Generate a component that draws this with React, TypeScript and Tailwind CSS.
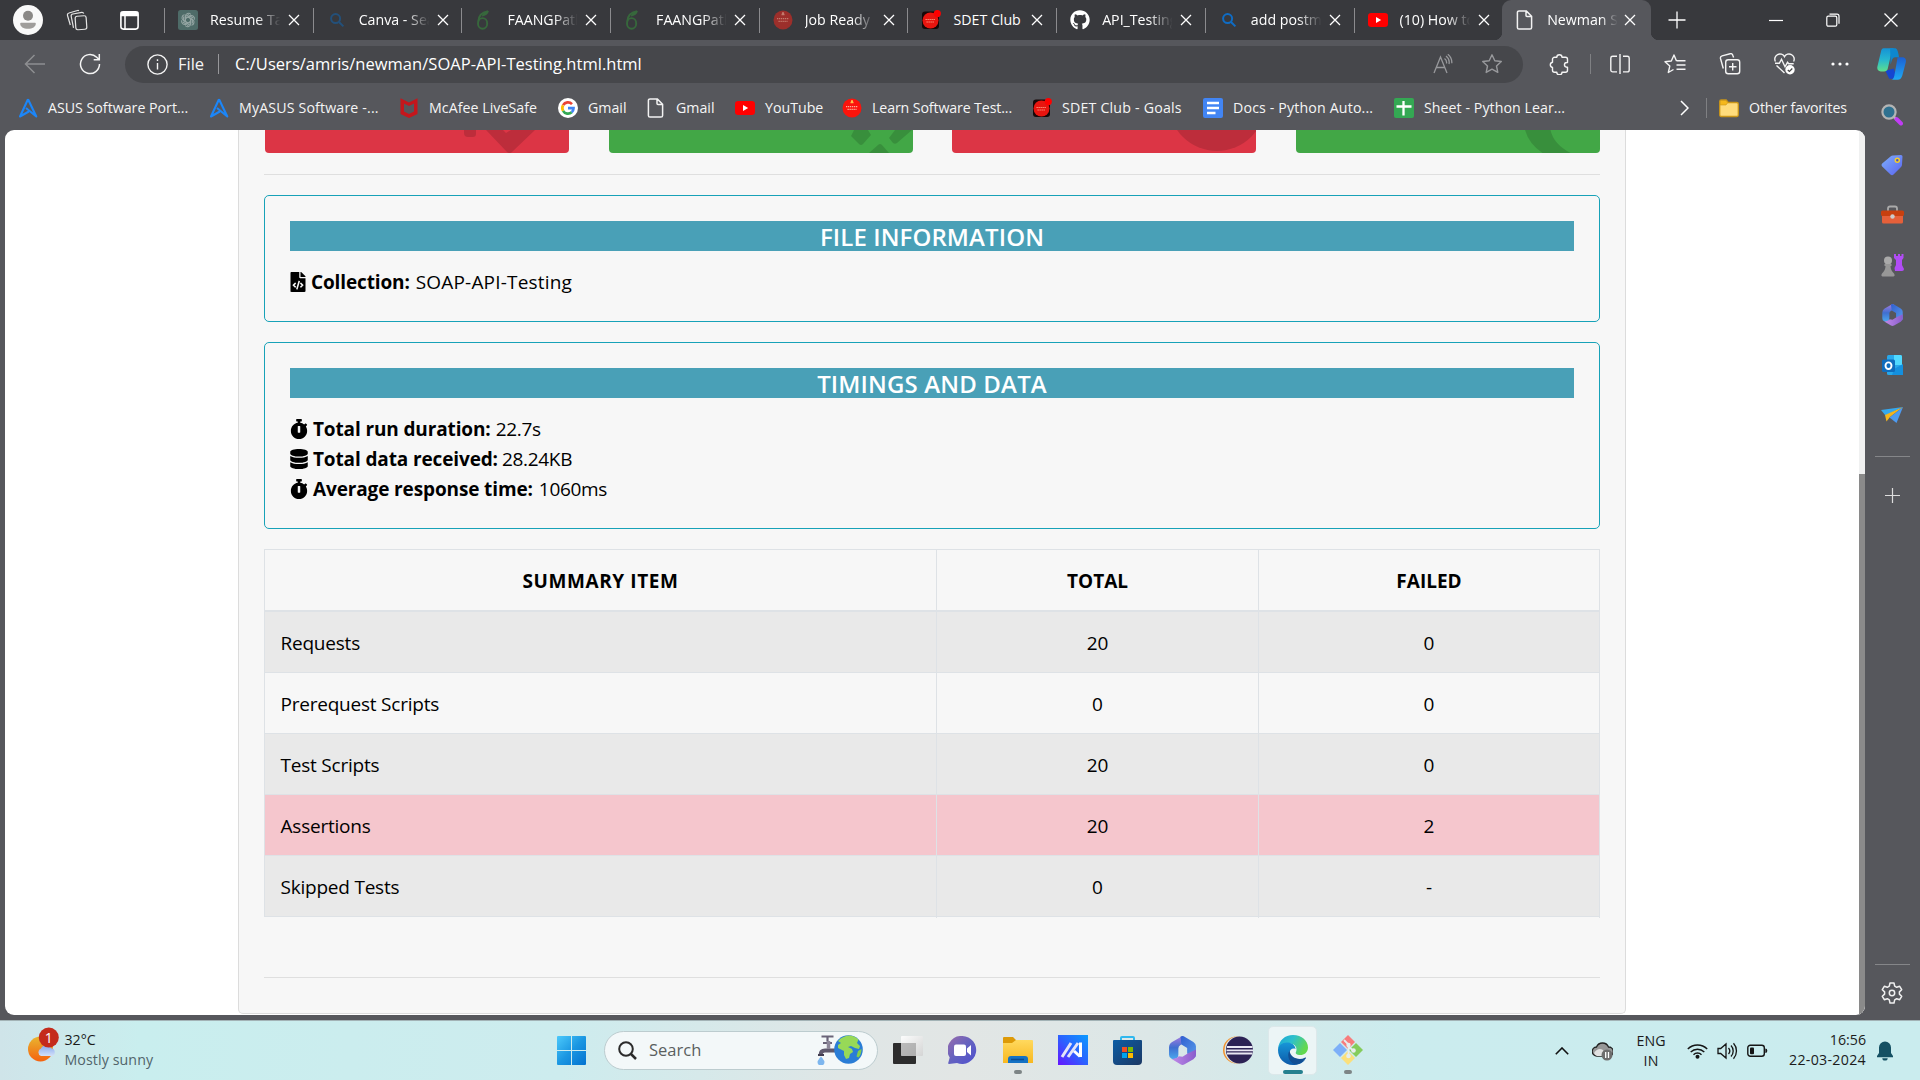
import React from "react";
import { FaDatabase, FaFileCode, FaGithub, FaStopwatch } from "react-icons/fa";

type P = { className?: string };

const Close = () => (
  <svg className="h-3 w-3 shrink-0" viewBox="0 0 12 12" fill="none" stroke="#fff" strokeWidth="1.3">
    <path d="M1 1l10 10M11 1L1 11" />
  </svg>
);

const Doc = () => (
  <svg className="h-5 w-5" viewBox="0 0 20 20" fill="none" stroke="#f2f2f2" strokeWidth="1.5" strokeLinejoin="round">
    <path d="M4 .9h7.2L16.6 6.3v11.2a1.6 1.6 0 0 1-1.6 1.6H4a1.6 1.6 0 0 1-1.6-1.6v-15A1.6 1.6 0 0 1 4 .9zM11 1v4.6a1 1 0 0 0 1 1h4.6" />
  </svg>
);

const YouTube = () => (
  <svg className="h-5 w-5" viewBox="0 0 20 20">
    <rect x="0" y="3" width="20" height="14" rx="3.2" fill="#f00" />
    <path d="M8 7l5.2 3L8 13z" fill="#fff" />
  </svg>
);

const Ai = () => (
  <svg className="h-5 w-5" viewBox="0 0 20 20">
    <rect width="20" height="20" rx="2.5" fill="#4e6b68" />
    <g fill="none" stroke="#94a5a3" strokeWidth="1.1">
      {[0, 60, 120, 180, 240, 300].map((a) => (
        <path key={a} transform={`rotate(${a} 10 10)`} d="M7.4 11.3V6.2a3 3 0 0 1 5.4-1.7M7.4 8.4l4.3-2.5 3.6 2.1" />
      ))}
    </g>
  </svg>
);

const Lens = ({ dim }: { dim?: boolean }) => (
  <svg className="h-5 w-5" viewBox="0 0 20 20" fill="none" stroke={dim ? "#23507a" : "#0f6cc4"} strokeWidth="2">
    <circle cx="8.6" cy="8.6" r="4.5" />
    <path d="M12 12l4.4 4.4" />
  </svg>
);

const Leaf = () => (
  <svg className="h-5 w-5" viewBox="0 0 20 20" fill="none" stroke="#37683c" strokeWidth="1.9">
    <ellipse cx="7.6" cy="13.4" rx="4.6" ry="5.3" />
    <path d="M3.3 11.5C3.4 6.300 6.800 2.300 13 1.200" />
    <path d="M6.500 6.500C8 2.600 10.500 1 14 1c-1 3-3 5-7.500 5.500z" fill="#37683c" stroke="none" />
  </svg>
);

const Academy = ({ dim }: { dim?: boolean }) => (
  <svg className="h-5 w-5" viewBox="0 0 20 20">
    <circle cx="10" cy="10" r="9.500" fill={dim ? "#9c2f2b" : "#fb140c"} />
    <path d="M8.500 4.500h3M9 3h2" stroke={dim ? "#c37a6d" : "#ffc04a"} strokeWidth="1.300" />
    <path d="M4 8.600h12M5.500 11.400h9" stroke={dim ? "#c37a6d" : "#ffb09a"} strokeWidth="1.300" strokeDasharray="1.300 .7" />
  </svg>
);

const Sdet = () => (
  <svg className="h-5 w-5" viewBox="0 0 20 20">
    <rect x="1" y="1.500" width="17" height="17.500" rx="3" fill="#170808" />
    <circle cx="9.500" cy="10.500" r="8" fill="#e8150f" />
    <path d="M4.500 9.500h10M5.500 12h8" stroke="#ff9a80" strokeWidth="1.100" strokeDasharray="1.300 .7" />
    <circle cx="16.300" cy="3.600" r="3.600" fill="#f00" />
  </svg>
);

const Asus = () => (
  <svg className="h-5 w-5" viewBox="0 0 20 20" fill="none" stroke="#1c86f8" strokeWidth="2.100" strokeLinejoin="round">
    <path d="M10 1.200L2 18.500 10.800 13.500M10 1.200L18.300 18.500 8 10" />
  </svg>
);

const McAfee = () => (
  <svg className="h-5 w-5" viewBox="0 0 20 20">
    <path d="M1.500 .3L10 4.500 18.500 .3v15.600L10 19.900l-8.500-4zM5 5.600v8l5 2.400 5-2.400v-8l-5 2.500z" fill="#c4161c" fillRule="evenodd" />
  </svg>
);

const Google = () => (
  <svg className="h-5 w-5" viewBox="0 0 20 20">
    <circle cx="10" cy="10" r="10" fill="#fff" />
    <g fill="none" strokeWidth="2.700">
      <path d="M14 6.100A5.600 5.600 0 0 0 5.100 7.200" stroke="#ea4335" />
      <path d="M5.100 7.200a5.600 5.600 0 0 0 0 5.600" stroke="#fbbc05" />
      <path d="M5.100 12.800a5.600 5.600 0 0 0 8.600 1.400" stroke="#34a853" />
      <path d="M13.700 14.200A5.400 5.400 0 0 0 15.500 10.200H10" stroke="#4285f4" />
    </g>
  </svg>
);

const Docs = () => (
  <svg className="h-5 w-5" viewBox="0 0 20 20">
    <rect width="20" height="20" rx="2" fill="#4285f4" />
    <path d="M4 5h12M4 10h12M4 15h8.500" stroke="#fff" strokeWidth="2.300" />
  </svg>
);

const Sheet = () => (
  <svg className="h-5 w-5" viewBox="0 0 20 20">
    <rect width="20" height="20" rx="2" fill="#34a853" />
    <path d="M2.500 8.500h15M9.500 3v14.500" stroke="#fff" strokeWidth="2.300" />
  </svg>
);

const Folder = () => (
  <svg className="h-5 w-5" viewBox="0 0 20 20">
    <path d="M.7 17V3.500A1.500 1.500 0 0 1 2.200 2h5l2 2.500h8.600a1.500 1.500 0 0 1 1.500 1.500v11a1.500 1.500 0 0 1-1.500 1.500H2.200A1.500 1.500 0 0 1 .7 17z" fill="#ffdc7c" stroke="#c99518" strokeWidth="1.300" />
    <path d="M1.300 7V3.500a1 1 0 0 1 1-1h4.500l2 2.200L7 7z" fill="#f5b81c" stroke="#c99518" strokeWidth=".6" />
  </svg>
);

const tabs: { icon: React.ReactNode; label: string }[] = [
  { icon: <Ai />, label: "Resume Tai" },
  { icon: <Lens dim />, label: "Canva - Sea" },
  { icon: <Leaf />, label: "FAANGPath" },
  { icon: <Leaf />, label: "FAANGPath" },
  { icon: <Academy dim />, label: "Job Ready" },
  { icon: <Sdet />, label: "SDET Club" },
  { icon: <FaGithub className="h-5 w-5 text-white" />, label: "API_Testing" },
  { icon: <Lens />, label: "add postma" },
  { icon: <YouTube />, label: "(10) How to" },
];

const Fade = ({ children, className = "" }: { children: React.ReactNode; className?: string }) => (
  <span className={`w-[72px] shrink-0 overflow-hidden whitespace-nowrap ${className}`}>{children}</span>
);

function TabStrip() {
  return (
    <div className="flex h-10 shrink-0 items-center bg-[#38393d] text-[14.2px] text-white">
      <div className="flex w-[164px] shrink-0 items-center pl-[13px]">
        <svg className="h-[30px] w-[30px]" viewBox="0 0 30 30">
          <circle cx="15" cy="15" r="15" fill="#f9f9f9" />
          <circle cx="15" cy="10.800" r="5" fill="#8a8886" />
          <path d="M8 17.700h14a.8.8 0 0 1 .8.800c0 3.300-3.300 5.300-7.800 5.300s-7.800-2-7.800-5.300a.8.8 0 0 1 .8-.8z" fill="#9f9d9b" />
        </svg>
        <svg className="ml-[23px] h-[22px] w-[22px]" viewBox="0 0 22 22" fill="none" stroke="#e4e4e4" strokeWidth="1.200">
          <rect x="9.500" y="7" width="11" height="13.500" rx="2" transform="rotate(-4 15 14)" />
          <path d="M7.500 18.800L5.200 7.300a2 2 0 0 1 1.600-2.300l9-1.700a2 2 0 0 1 2 1.200M4.300 16L1.500 6.500A2 2 0 0 1 3 4L11.500 1.500a2 2 0 0 1 1.500.2" />
        </svg>
        <svg className="ml-8 h-[19px] w-[19px]" viewBox="0 0 19 19" fill="none" stroke="#fff" strokeWidth="1.600">
          <rect x=".9" y=".9" width="17.200" height="17.200" rx="2.500" />
          <path d="M1 3.500h17M5 3v15" strokeWidth="1.500" />
          <path d="M1.500 1.500h16v3h-16z" fill="#fff" />
        </svg>
      </div>
      {tabs.map((t, i) => (
        <div key={i} className="flex w-[148.7px] shrink-0 items-center">
          <div className="h-[25px] w-px bg-[#8b8b8e]" />
          <span className="ml-[13px] w-5 shrink-0">{t.icon}</span>
          <Fade
            className={
              t.label === "SDET Club"
                ? "ml-[12px]"
                : "ml-[12px] [mask-image:linear-gradient(to_right,black_65%,transparent_98%)]"
            }
          >
            {t.label}
          </Fade>
          <span className="ml-[6px]"><Close /></span>
        </div>
      ))}
      <div className="relative flex h-10 w-[148.500px] shrink-0 items-center rounded-t-[9px] bg-[#56575c]">
        <i className="absolute bottom-0 -left-2 h-2 w-2 bg-[radial-gradient(circle_at_0_0,transparent_8px,#56575c_8.5px)]" />
        <i className="absolute -right-2 bottom-0 h-2 w-2 bg-[radial-gradient(circle_at_100%_0,transparent_8px,#56575c_8.5px)]" />
        <span className="ml-[13px] w-5"><Doc /></span>
        <Fade className="ml-[12px] [mask-image:linear-gradient(to_right,black_75%,transparent_98%)]">Newman Su</Fade>
        <span className="ml-[5px]"><Close /></span>
      </div>
      <svg className="ml-[17px] h-[18px] w-[18px] shrink-0" viewBox="0 0 18 18" stroke="#fff" strokeWidth="1.300">
        <path d="M9 .5v17M.5 9h17" />
      </svg>
      <div className="flex grow items-center justify-end pr-[22px]">
        <svg className="h-[14px] w-[14px]" viewBox="0 0 14 14" stroke="#fff" strokeWidth="1.200"><path d="M0 7.500h14" /></svg>
        <svg className="ml-[43px] h-[14px] w-[14px]" viewBox="0 0 14 14" fill="none" stroke="#fff" strokeWidth="1.200">
          <rect x=".8" y="3.200" width="10" height="10" rx="1.500" />
          <path d="M3.500 1.200h7.500a2 2 0 0 1 2 2v7.500" />
        </svg>
        <svg className="ml-[44px] h-[14px] w-[14px]" viewBox="0 0 14 14" stroke="#fff" strokeWidth="1.300"><path d="M.5.5l13 13M13.500.5l-13 13" /></svg>
      </div>
    </div>
  );
}

const starPath = "M11 1.800l2.800 5.900 6.500.8-4.800 4.500 1.300 6.400-5.800-3.200-5.800 3.200 1.300-6.400L1.700 8.500l6.500-.8z";

function Toolbar() {
  return (
    <div className="flex h-[50px] shrink-0 items-center bg-[#56575c] pt-[3px] pb-[5px] text-[#f4f4f4]">
      <svg className="ml-6 h-[22px] w-[22px]" viewBox="0 0 22 22" fill="none" stroke="#8d8e91" strokeWidth="1.500">
        <path d="M21 11H2M10.500 2L1.500 11l9 9" />
      </svg>
      <svg className="ml-[33px] h-[22px] w-[22px]" viewBox="0 0 22 22" fill="none" stroke="currentColor" strokeWidth="1.500">
        <path d="M20.500 11a9.500 9.500 0 1 1-2.800-6.700L20 6.500M20.300 1v5.700h-5.600" />
      </svg>
      <div className="ml-[24px] flex h-[37px] w-[1398px] items-center rounded-full bg-[#46474b]">
        <svg className="ml-[22px] h-[21px] w-[21px]" viewBox="0 0 21 21" fill="none" stroke="currentColor" strokeWidth="1.400">
          <circle cx="10.500" cy="10.500" r="9.600" />
          <path d="M10.500 9v6.500M10.500 5.300v1.800" />
        </svg>
        <span className="ml-[10px] w-[40px] text-[16.500px]">File</span>
        <div className="h-5 w-px bg-[#98989b]" />
        <span className="ml-[16px] grow text-[16.500px] tracking-[0.03px] text-white">C:/Users/amris/newman/SOAP-API-Testing.html.html</span>
        <svg className="h-[20px] w-[20px]" viewBox="0 0 20 20" fill="none" stroke="#98999c" strokeWidth="1.300">
          <path d="M1 19L7.500 3 14 19M3.300 13.500h8.400M11.500 4.500a5 5 0 0 1 2 5M13 2a8 8 0 0 1 3 8M14.800.3a10.500 10.500 0 0 1 4 9" />
        </svg>
        <svg className="mr-[20px] ml-[28px] h-[22px] w-[22px]" viewBox="0 0 22 22" fill="none" stroke="#98999c" strokeWidth="1.400" strokeLinejoin="round">
          <path d={starPath} />
        </svg>
      </div>
      <div className="flex items-center">
        <svg className="ml-[26px] h-[21px] w-[21px]" viewBox="0 0 21 21" fill="none" stroke="currentColor" strokeWidth="1.400" strokeLinejoin="round">
          <path d="M7.800 3.300a2.600 2.600 0 0 1 5.200 0h3.500a2 2 0 0 1 2 2v3.200h-.7a2.300 2.300 0 0 0 0 4.700h.7v3a2 2 0 0 1-2 2H13a2.600 2.600 0 0 1-5.200 0H5.500a2 2 0 0 1-2-2v-2.700a2.700 2.700 0 0 1 0-5.300V5.300a2 2 0 0 1 2-2z" />
        </svg>
        <div className="ml-[20px] h-5 w-px bg-[#7f8083]" />
        <svg className="ml-[19px] h-[20px] w-[20px]" viewBox="0 0 20 20" fill="none" stroke="currentColor" strokeWidth="1.400">
          <path d="M10 0v20M7 2.200H2.700A1.900 1.900 0 0 0 .8 4v12a1.900 1.900 0 0 0 1.900 1.900H7M13 2.200h4.300A1.900 1.900 0 0 1 19.200 4v12a1.900 1.900 0 0 1-1.900 1.900H13" />
        </svg>
        <svg className="ml-[34px] h-[22px] w-[22px]" viewBox="0 0 22 22" fill="none" stroke="currentColor" strokeWidth="1.400" strokeLinejoin="round">
          <path d="M12.500 8L10 2 7.300 8 1 8.700l4.800 4.400L4.300 19.500 9.500 16.500M12.500 7.800h9M12.500 12h9M12.500 16.200h9" />
        </svg>
        <svg className="ml-[33px] h-[22px] w-[22px]" viewBox="0 0 22 22" fill="none" stroke="currentColor" strokeWidth="1.400">
          <rect x="6.700" y="6.700" width="14" height="14" rx="2.500" />
          <path d="M13.700 10v7.500M10 13.700h7.500M4.300 15.500L1.500 5.500a2.300 2.300 0 0 1 1.600-2.700l8-2.100a2.300 2.300 0 0 1 2.700 1.600l.8 2.200" />
        </svg>
        <svg className="ml-[33px] h-[22px] w-[22px]" viewBox="0 0 22 22" fill="none" stroke="currentColor" strokeWidth="1.400">
          <path d="M10.500 20L2.500 12.500M1.400 8.500a5 5 0 0 1 9.100-4.800 5 5 0 0 1 9.100 4.800M1 10.300h4.300l2.200-4 3.500 7.500 2.500-4.500 1.200 1.500h5" />
          <circle cx="16" cy="16.800" r="4.700" fill="#fff" stroke="none" />
          <path d="M13.800 17l1.600 1.500 2.900-3" stroke="#444" strokeWidth="1.200" />
        </svg>
        <svg className="ml-[35px] h-[4px] w-[18px]" viewBox="0 0 18 4" fill="#fff">
          <circle cx="2" cy="2" r="1.600" /><circle cx="9" cy="2" r="1.600" /><circle cx="16" cy="2" r="1.600" />
        </svg>
        <svg className="ml-[28px] h-[32px] w-[30px]" viewBox="0 0 32 28" preserveAspectRatio="none">
          <defs>
            <linearGradient id="cpA" x1="0" y1="0" x2="0" y2="1"><stop offset="0" stopColor="#1593d6" /><stop offset=".5" stopColor="#27b7cf" /><stop offset="1" stopColor="#5fe08b" /></linearGradient>
            <linearGradient id="cpB" x1="0" y1="0" x2="0" y2="1"><stop offset="0" stopColor="#1c5fd3" /><stop offset="1" stopColor="#1fa9f3" /></linearGradient>
          </defs>
          <path d="M9 20l4 7h8l-3-9z" fill="#1546d0" />
          <path d="M22 8h5c3 0 4.500 2 3.700 4.500L27 24c-.8 2.500-2.500 3.700-5 3.700h-7c2 0 3-1.500 3.500-3.500z" fill="url(#cpB)" />
          <path d="M7 .3h12c-2 0-3 1.500-3.500 3.500L11.500 18c-.6 2-1.800 2.500-4 2.500H4c-3 0-4.300-2-3.500-4.500L4 4C4.600 1.500 5.500.3 7 .3z" fill="url(#cpA)" />
          <path d="M14 .3h5c2.300 0 3.500 2 4.500 7.700h-3.800c-2.500 0-3.700 1.500-4.200 3.500l-1 3z" fill="#0d87cf" />
        </svg>
      </div>
    </div>
  );
}

const favs: { icon: React.ReactNode; label: string; w: string }[] = [
  { icon: <Asus />, label: "ASUS Software Port...", w: "w-[191px]" },
  { icon: <Asus />, label: "MyASUS Software -...", w: "w-[190px] tracking-[0.15px]" },
  { icon: <McAfee />, label: "McAfee LiveSafe", w: "w-[159px] tracking-[0.05px]" },
  { icon: <Google />, label: "Gmail", w: "w-[88px]" },
  { icon: <Doc />, label: "Gmail", w: "w-[89px]" },
  { icon: <YouTube />, label: "YouTube", w: "w-[107px]" },
  { icon: <Academy />, label: "Learn Software Test...", w: "w-[190px] tracking-[-0.12px]" },
  { icon: <Sdet />, label: "SDET Club - Goals", w: "w-[171px] tracking-[0.2px]" },
  { icon: <Docs />, label: "Docs - Python Auto...", w: "w-[191px] tracking-[0.15px]" },
  { icon: <Sheet />, label: "Sheet - Python Lear...", w: "w-[283px] tracking-[0.05px]" },
];

function Favorites() {
  return (
    <div className="flex h-10 shrink-0 items-center bg-[#56575c] pb-1 pl-[18px] text-[14.200px] text-[#f5f5f5]">
      {favs.map((f, i) => (
        <div key={i} className={`flex shrink-0 items-center gap-[10px] whitespace-nowrap ${f.w}`}>
          {f.icon}
          <span>{f.label}</span>
        </div>
      ))}
      <svg className="ml-[3px] h-4 w-[9px]" viewBox="0 0 9 16" fill="none" stroke="#fff" strokeWidth="1.500"><path d="M1 1l7 7-7 7" /></svg>
      <div className="ml-[17px] h-5 w-px bg-[#7f8083]" />
      <div className="ml-[12px] flex items-center gap-[10px]">
        <Folder />
        <span className="tracking-[-0.12px]">Other favorites</span>
      </div>
    </div>
  );
}

function Cards() {
  return (
    <div className="flex h-[23px] gap-[39.600px] pl-px">
      <div className="h-[23px] w-[304px] rounded-b bg-[#dc3545]">
        <svg className="h-[23px] w-[304px]" viewBox="0 0 304 23" fill="#000" fillOpacity=".14">
          <path d="M199 0h12v4a3 3 0 0 1-3 3h-5a4 4 0 0 1-4-4zM221 0h17l3 3 5-3h24L247.500 21.500q-3 3-6 0z" />
        </svg>
      </div>
      <div className="h-[23px] w-[304px] rounded-b bg-[#42a746]">
        <svg className="h-[23px] w-[304px]" viewBox="0 0 304 23" fill="#000" fillOpacity=".14">
          <path d="M245 0h14l3 5-8 9q-2 2-4 0l-8-8zM286 0h17L288 13q-2 1.500-4 0l-4-5zM260 23l9-8q2-2 4 0l7 8z" />
        </svg>
      </div>
      <div className="h-[23px] w-[304px] rounded-b bg-[#dc3545]">
        <svg className="h-[23px] w-[304px]" viewBox="0 0 304 23" fill="#000" fillOpacity=".14"><circle cx="265" cy="-27.500" r="48.500" /></svg>
      </div>
      <div className="h-[23px] w-[304px] rounded-b bg-[#42a746]">
        <svg className="h-[23px] w-[304px]" viewBox="0 0 304 23" fill="#000" fillOpacity=".14"><path d="M229 0h25.500q3 14 20 23h-28Q233 14 229 0z" /></svg>
      </div>
    </div>
  );
}

const rows = [
  ["Requests", "20", "0", "bg-[#e9e9e9]"],
  ["Prerequest Scripts", "0", "0", "bg-[#f7f7f7]"],
  ["Test Scripts", "20", "0", "bg-[#e9e9e9]"],
  ["Assertions", "20", "2", "bg-[#f5c6cd]"],
  ["Skipped Tests", "0", "-", "bg-[#e9e9e9]"],
];

const Line = ({ icon, label, value, fit }: { icon: React.ReactNode; label: string; value: string; fit: string }) => (
  <div className="flex h-[30px] items-center">
    {icon}
    <b className="tracking-[-0.13px]">{label}</b>
    <span className={fit}>{value}</span>
  </div>
);

function Report() {
  return (
    <div className="flex w-[1388px] shrink-0 flex-col rounded-b-[5px] border-x border-b border-[#dcdcdc] bg-[#f7f7f7] px-[25px] text-[19px] text-black">
      <Cards />
      <div className="mt-[21px] h-px bg-[#dfdfdf]" />
      <div className="mt-[20px] h-[127px] w-[1336px] rounded-[5px] border border-[#17a2b8] px-[25px] pt-[25px]">
        <h2 className="h-[30px] bg-[#49a0b7] text-center text-[24px] leading-[31px] font-semibold tracking-[0.1px] text-white">FILE INFORMATION</h2>
        <div className="mt-4">
          <Line icon={<FaFileCode className="mr-[5px] h-5 w-4" />} label="Collection:" value="SOAP-API-Testing" fit="ml-[6px] tracking-[0.18px]" />
        </div>
      </div>
      <div className="mt-[20px] h-[187px] w-[1336px] rounded-[5px] border border-[#17a2b8] px-[25px] pt-[25px]">
        <h2 className="h-[30px] bg-[#49a0b7] text-center text-[24px] leading-[31px] font-semibold tracking-[0.15px] text-white">TIMINGS AND DATA</h2>
        <div className="mt-4">
          <Line icon={<FaStopwatch className="mr-[5px] h-5 w-[18px]" />} label="Total run duration:" value="22.7s" fit="ml-[5px] tracking-[-0.3px]" />
          <Line icon={<FaDatabase className="mr-[5px] h-5 w-[18px]" />} label="Total data received:" value="28.24KB" fit="ml-[4px] tracking-[-0.3px]" />
          <Line icon={<FaStopwatch className="mr-[5px] h-5 w-[18px]" />} label="Average response time:" value="1060ms" fit="ml-[6px] tracking-[-0.3px]" />
        </div>
      </div>
      <div className="mt-[20px] w-[1336px] border-t border-l border-[#dee2e6]">
        <div className="grid h-[62px] grid-cols-[672px_322px_341px] border-b-2 border-[#dee2e6] text-center leading-[62px] font-bold">
          <div className="h-[60px] border-r border-[#dee2e6] tracking-[0.6px]">SUMMARY ITEM</div>
          <div className="h-[60px] border-r border-[#dee2e6]">TOTAL</div>
          <div className="h-[60px] border-r border-[#dee2e6]">FAILED</div>
        </div>
        {rows.map(([name, total, failed, bg]) => (
          <div key={name} className={`grid h-[61px] grid-cols-[672px_322px_341px] border-b border-[#dee2e6] text-center leading-[62px] ${bg}`}>
            <div className="border-r border-[#dee2e6] pl-[15.500px] text-left tracking-[-0.22px]">{name}</div>
            <div className="border-r border-[#dee2e6]">{total}</div>
            <div className="border-r border-[#dee2e6]">{failed}</div>
          </div>
        ))}
      </div>
      <div className="mt-[60px] h-px bg-[#dfdfdf]" />
    </div>
  );
}

const Cell = ({ children }: { children: React.ReactNode }) => <div className="flex h-[50px] w-[46px] items-center justify-center">{children}</div>;

const Hex = ({ className }: P) => (
  <svg className={className} viewBox="0 0 26 28">
    <defs>
      <linearGradient id="hxA" x1="0" y1="0" x2="0" y2="1"><stop offset="0" stopColor="#a77be0" /><stop offset=".5" stopColor="#3f6fd0" /><stop offset="1" stopColor="#4ba8ee" /></linearGradient>
      <linearGradient id="hxB" x1="0" y1="0" x2="1" y2="1"><stop offset="0" stopColor="#2f5fd0" /><stop offset="1" stopColor="#5a9bea" /></linearGradient>
      <linearGradient id="hxC" x1="0" y1="0" x2="1" y2="0"><stop offset="0" stopColor="#c08be8" /><stop offset="1" stopColor="#8a5ccc" /></linearGradient>
    </defs>
    <path d="M13 0L3 5.800Q0 7.500 0 11v7q0 3 2.500 4l2 .5Q9 21.500 9 18v-6q0-2 2-3.200l4-2.300V1z" fill="url(#hxA)" />
    <path d="M11 .7Q13-.5 15 .7l8.500 5Q26 7.300 26 10v9q-.5 2-3 1.500L17.500 17v-5.500L12 8.200z" fill="url(#hxB)" />
    <path d="M26 13v5q0 3-2.500 4.500L15 27.300q-2 1.200-4 0L2.500 22.200Q7 22.500 9.500 19.500l3.500.5L18 17z" fill="url(#hxC)" />
  </svg>
);

function Sidebar() {
  return (
    <div className="flex w-[54px] shrink-0 flex-col items-center">
      <div className="-mt-[40px] flex flex-col items-center">
        <Cell>
          <svg className="h-[22px] w-[22px]" viewBox="0 0 22 22" fill="none">
            <path d="M13 13l3 3" stroke="#bbb" strokeWidth="2.500" />
            <circle cx="8" cy="8" r="6.600" fill="#2f7190" stroke="#b4b4b4" strokeWidth="2.200" />
            <path d="M15.500 15l4.500 4.500" stroke="#c03cf5" strokeWidth="4" strokeLinecap="round" />
          </svg>
        </Cell>
        <Cell>
          <svg className="h-[22px] w-[22px]" viewBox="0 0 22 22">
            <defs><linearGradient id="tagG" x1="0" y1="0" x2="1" y2="1"><stop offset="0" stopColor="#7eb0fb" /><stop offset="1" stopColor="#5a63f0" /></linearGradient></defs>
            <path d="M12 1.500L20 1q1.500 0 1.500 1.500l-.5 8q0 1.500-1 2.500l-7.500 7.500q-1.500 1.300-3 0L1.200 12.500q-1.300-1.500 0-3L9.500 2.500Q10.500 1.600 12 1.500z" fill="url(#tagG)" />
            <circle cx="16.300" cy="6.300" r="2" fill="#4b55c0" stroke="#f5cd2a" strokeWidth="1.500" />
          </svg>
        </Cell>
        <Cell>
          <svg className="h-[20px] w-[23px]" viewBox="0 0 23 20">
            <path d="M7 6V3.500Q7 1.500 9 1.500h5q2 0 2 2V6" fill="none" stroke="#aaa" strokeWidth="1.800" />
            <rect x="1" y="9" width="21" height="9.500" rx="1.500" fill="#e5603a" />
            <rect x="0" y="5.500" width="23" height="5.500" rx="1.500" fill="#c8400f" />
            <circle cx="11.500" cy="11.500" r="2.200" fill="#ccc" />
          </svg>
        </Cell>
        <Cell>
          <svg className="h-[23px] w-[23px]" viewBox="0 0 23 23">
            <path d="M13 0h2v2h2V0h2v2h1.500V0h2v4L21 6v5l2 4q0 2-2 2h-7l-.500-3 1.500-3V6l-2-2z" fill="#b14cf5" />
            <circle cx="7" cy="6.500" r="4" fill="#aaa" />
            <path d="M3.500 10h7v2H9.500q0 4 3.500 7.500 1.500 2.500-.5 3h-11q-2-.5-.5-3Q4.500 16 4.500 12h-1z" fill="#979797" />
          </svg>
        </Cell>
        <Cell><Hex className="h-[22px] w-[21px]" /></Cell>
        <Cell>
          <svg className="mt-px h-[21px] w-[21px]" viewBox="0 0 21 21">
            <rect x="5" y="0" width="15" height="20" rx="1.500" fill="#28a8ea" />
            <path d="M12 0h6.500Q20 0 20 1.500V10h-8z" fill="#50d9ff" />
            <path d="M12 14l9-5v11H10z" fill="#1490df" />
            <rect x="0" y="4.500" width="13" height="12.500" rx="1.500" fill="#0f6cbd" />
            <ellipse cx="6.500" cy="10.700" rx="3" ry="3.300" fill="none" stroke="#fff" strokeWidth="1.900" />
          </svg>
        </Cell>
        <Cell>
          <svg className="h-[17px] w-[22px]" viewBox="0 0 22 17">
            <path d="M22 0L0 3l4.500 5.500z" fill="#35a8ee" />
            <path d="M22 0L4 8l1.500 6.500L9 10z" fill="#f5b51c" />
            <path d="M22 0L8.500 10.500 15.500 16z" fill="#4d9bf2" />
          </svg>
        </Cell>
      </div>
      <div className="mt-[16px] h-px w-[35px] bg-[#858689]" />
      <svg className="mt-[31px] h-[15px] w-[15px]" viewBox="0 0 15 15" stroke="#ddd" strokeWidth="1.200"><path d="M7.500 0v15M0 7.500h15" /></svg>
      <div className="mt-auto h-px w-[35px] bg-[#858689]" />
      <svg className="mt-[17px] mb-[16px] h-[22px] w-[22px]" viewBox="0 0 22 22" fill="none" stroke="#f0f0f0" strokeWidth="1.500" strokeLinejoin="round">
        <path d="M9 1h4l.7 3.100 2 1.200 3-1L20.700 7.700l-2.300 2.200v2.200l2.300 2.200-2 3.400-3-1-2 1.200L13 21H9l-.7-3.100-2-1.200-3 1-2-3.400 2.300-2.200V9.900L1.300 7.700l2-3.400 3 1 2-1.200z" />
        <circle cx="11" cy="11" r="2.700" />
      </svg>
    </div>
  );
}

const Slot = ({ children }: { children: React.ReactNode }) => (
  <div className="flex h-full w-[55px] shrink-0 flex-col items-center pt-[15px]">{children}</div>
);

function Taskbar() {
  return (
    <div className="flex h-[60px] shrink-0 border-t border-[#a3b3b6] bg-[linear-gradient(90deg,#cfe4e9_0,#c9eeee_140px,#cdecee_560px,#dfe6e6_840px,#e2e6e5_960px,#dce7e7_1150px,#cbecee_1400px,#caecee_100%)] text-[14.200px] text-[#1b1b1b]">
      <div className="flex w-[544px] shrink-0 pl-[27px]">
        <svg className="mt-[6px] h-[36px] w-[32px]" viewBox="0 0 32 36">
          <defs>
            <linearGradient id="sun" x1="0" y1="0" x2="0" y2="1"><stop offset="0" stopColor="#e9b630" /><stop offset="1" stopColor="#f5620f" /></linearGradient>
            <linearGradient id="cld" x1="0" y1="0" x2="0" y2="1"><stop offset="0" stopColor="#84a8ee" /><stop offset="1" stopColor="#d3e0f8" /></linearGradient>
          </defs>
          <circle cx="13.500" cy="22" r="12.500" fill="url(#sun)" />
          <path d="M14 29a4 4 0 0 1 0-7.500 5.500 5.500 0 0 1 10-.3 4 4 0 0 1 1 7.800z" fill="url(#cld)" />
          <circle cx="21.800" cy="10.500" r="10" fill="#c42b1c" />
          <text x="21.800" y="15.500" textAnchor="middle" fontSize="14" fill="#fff" fontFamily="Open Sans">1</text>
        </svg>
        <div className="ml-[5.500px] pt-[9px] leading-[20px]">
          <div>32°C</div>
          <div className="tracking-[0.1px] text-[#51646a]">Mostly sunny</div>
        </div>
      </div>
      <Slot>
        <svg className="h-[29px] w-[29px]" viewBox="0 0 29 29">
          <defs><linearGradient id="win" x1="0" y1="0" x2="1" y2="1"><stop offset="0" stopColor="#4cc9fb" /><stop offset=".5" stopColor="#1b97e2" /><stop offset="1" stopColor="#0272d0" /></linearGradient></defs>
          <path d="M1 0h13v14H0V1q0-1 1-1zM15 0h13q1 0 1 1v13H15zM0 15h14v14H1q-1 0-1-1zM15 15h14v13q0 1-1 1H15z" fill="url(#win)" />
        </svg>
      </Slot>
      <div className="mt-[9.500px] ml-[5px] flex h-[39px] w-[274px] shrink-0 items-center rounded-full border border-[#bccccf] bg-[#f3f8f9]">
        <svg className="ml-[13px] h-[19px] w-[19px]" viewBox="0 0 19 19" fill="none" stroke="#2b2b2b" strokeWidth="2"><circle cx="8" cy="8" r="6.800" /><path d="M12.500 12.500l5.500 5.500" strokeWidth="2.500" /></svg>
        <span className="ml-[12px] grow text-[16.500px] text-[#5a5f60]">Search</span>
        <svg className="mr-[14px] h-[30px] w-[46px]" viewBox="0 0 46 30">
          <path d="M4.500 1.500h12M10.500 1.500v5M6 8h9" stroke="#6a6479" strokeWidth="2.200" />
          <path d="M20 15.500H8q-4.500 0-4.500 5" fill="none" stroke="#5e596d" strokeWidth="4" />
          <path d="M11.500 6v8" stroke="#8d889a" strokeWidth="3.500" />
          <path d="M1 20h6" stroke="#423d50" strokeWidth="2" />
          <path d="M4 21.500q3.500 4 3.500 5.500a3.400 3.400 0 0 1-7 0q0-1.500 3.500-5.500z" fill="#7db6ee" />
          <circle cx="31.500" cy="14.500" r="14.300" fill="#2a7dd6" />
          <path d="M21 6q5-5.500 12-5.500 5 .5 8.500 4L40 8l3 3-1 3-4-1-4-2-3 1 4 2 1 3-3 2-1 4-3 1-2-4v-4l-6-3v-3l3-2z" fill="#97d957" />
          <path d="M41 16l3.500-2q0 5-3 8.500l-2-1z" fill="#84cf4c" />
        </svg>
      </div>
      <div className="flex h-full pl-[2px]">
        <Slot>
          <svg className="h-[29px] w-[30px]" viewBox="0 0 30 29">
            <defs><linearGradient id="tv" x1="0" y1="0" x2="1" y2="1"><stop offset="0" stopColor="#fff" /><stop offset="1" stopColor="#d3d3d3" /></linearGradient></defs>
            <rect x="0" y="7" width="23" height="21" rx="1" fill="#2d2d2d" />
            <rect x="8" y="0" width="22" height="20" rx="1" fill="url(#tv)" fillOpacity=".9" />
            <path d="M8 7h15v13H8z" fill="#999" fillOpacity=".55" />
          </svg>
        </Slot>
        <Slot>
          <svg className="h-[29px] w-[29px]" viewBox="0 0 29 29">
            <defs><linearGradient id="chat" x1="0" y1="0" x2="1" y2="1"><stop offset="0" stopColor="#9a6cab" /><stop offset=".5" stopColor="#6462c0" /><stop offset="1" stopColor="#4f50d0" /></linearGradient></defs>
            <path d="M14.500 0a14 14 0 1 1-5.500 27L1 28q-1 0-.8-1l1.500-5.500A14 14 0 0 1 14.500 0z" fill="url(#chat)" />
            <rect x="6" y="8.500" width="12" height="11.500" rx="2" fill="#fff" />
            <path d="M19 12.500l4-3.500v10.500l-4-3.500z" fill="#fff" />
          </svg>
        </Slot>
        <Slot>
          <svg className="h-[29px] w-[30px]" viewBox="0 0 30 29">
            <defs><linearGradient id="fold" x1="0" y1="0" x2="0" y2="1"><stop offset="0" stopColor="#ffd95e" /><stop offset="1" stopColor="#f8b820" /></linearGradient></defs>
            <path d="M0 2q0-1 1-1h9l3 3h15v6H0z" fill="#dd9a08" />
            <path d="M0 7h9l4-3h16q1 0 1 1v22H0z" fill="url(#fold)" />
            <path d="M5 27v-4q0-3 3-3h14q3 0 3 3v4z" fill="#1572c4" /><path d="M8 23.500h13" stroke="#0b4b92" strokeWidth="1.500" />
          </svg>
          <div className="mt-[5px] h-[4px] w-[8px] rounded-full bg-[#7d8586]" />
        </Slot>
        <Slot>
          <svg className="-mt-px h-[30px] w-[30px]" viewBox="0 0 30 30">
            <defs><linearGradient id="mya" x1="0" y1="1" x2="1" y2="0"><stop offset="0" stopColor="#6614ff" /><stop offset=".5" stopColor="#2b62ff" /><stop offset="1" stopColor="#0b9bff" /></linearGradient></defs>
            <rect width="30" height="30" fill="url(#mya)" />
            <path d="M4 22L13 8M10 22L20 8" stroke="#e4e4f8" strokeWidth="3" /><path d="M22.500 7.500V22M16 16l6 5.500" stroke="#fff" strokeWidth="3" />
          </svg>
        </Slot>
        <Slot>
          <svg className="h-[29px] w-[29px]" viewBox="0 0 29 29">
            <defs><linearGradient id="sto" x1="0" y1="0" x2="1" y2="1"><stop offset="0" stopColor="#0c5da5" /><stop offset="1" stopColor="#1c3864" /></linearGradient></defs>
            <path d="M8 5V2q0-1 1-1h11q1 0 1 1v3" fill="none" stroke="#30b8ee" strokeWidth="2" />
            <path d="M0 5q0-1 1-1h27q1 0 1 1v20q0 4-4 4H4q-4 0-4-4z" fill="url(#sto)" />
            <path d="M9 11h5v5H9z" fill="#f25022" /><path d="M15 11h5v5h-5z" fill="#7fba00" /><path d="M9 17h5v5H9z" fill="#00a4ef" /><path d="M15 17h5v5h-5z" fill="#ffb900" />
          </svg>
        </Slot>
        <Slot><Hex className="h-[29px] w-[27px]" /></Slot>
        <Slot>
          <svg className="h-[28px] w-[30px]" viewBox="0 0 30 28">
            <circle cx="13.500" cy="14" r="13.500" fill="#f3912b" /><circle cx="15" cy="14" r="13.500" fill="#dde5e5" /><circle cx="16.500" cy="14" r="13.500" fill="#2c2255" />
            <path d="M4 11h25.500M3.500 14.300h26.500M4 17.500h25.500" stroke="#e9e7f3" strokeWidth="1.800" />
          </svg>
        </Slot>
        <div className="flex h-full w-[55px] items-start justify-center pt-[5px]">
          <div className="flex h-[49px] w-[49px] flex-col items-center rounded-[5px] border border-[#dce8ea] bg-[#ecf5f6] pt-[8px]">
            <svg className="h-[30px] w-[30px] shrink-0" viewBox="0 0 30 30">
              <defs>
                <linearGradient id="edA" x1="0" y1="0" x2="1" y2=".4"><stop offset="0" stopColor="#1aa5d8" /><stop offset=".5" stopColor="#2ec0cc" /><stop offset="1" stopColor="#62d84f" /></linearGradient>
                <linearGradient id="edB" x1="0" y1="0" x2="0" y2="1"><stop offset="0" stopColor="#1796d8" /><stop offset="1" stopColor="#0c59a8" /></linearGradient>
              </defs>
              <path d="M0 14C1 5 7 0 15 0c9 0 15 6 15 12.500 0 5-4 7.500-7.500 7.500-4 0-5.500-1.500-4.500-3 1.500-3 0-8-6-8.500C7 8 2 10 0 14z" fill="url(#edA)" />
              <path d="M0 15c0-5 5-8 10-7.500 5 .5 7.500 4 7.500 6.500-3-1.500-6 1-6 4 0 5 5 8.500 10 8.500 2 0 4-1 5.500-1.500C24.500 28 20 30 15 30 6 30 0 23 0 15z" fill="url(#edB)" />
              <path d="M11.500 15.500C8 21 12 29.500 19 29.300c4-.800 7-3.300 8.800-5.800.500-1-.300-1.300-1-.8C21 26 12 22.500 11.500 15.500z" fill="#124f94" />
            </svg>
            <div className="mt-[5px] h-[4px] w-5 shrink-0 rounded-full bg-[#26808f]" />
          </div>
        </div>
        <Slot>
          <svg className="-mt-px h-[30px] w-[30px]" viewBox="0 0 30 30">
            <path d="M15 0l7 7-7 7-7-7z" fill="#f77c7c" /><path d="M7 8l7 7-7 7-7-7z" fill="#7daff8" /><path d="M23 8l7 7-7 7-7-7z" fill="#84cc5c" /><path d="M15 16l7 7-7 7-7-7z" fill="#fbe07c" />
            <path d="M11 5l4.500 4.500V22M15 11l5 4.500" fill="none" stroke="#e6eeee" strokeWidth="1.800" />
            <circle cx="15.500" cy="10" r="2.200" fill="#e6eeee" /><circle cx="15.500" cy="21" r="2.300" fill="#e6eeee" /><circle cx="20.500" cy="15.500" r="2.300" fill="#e6eeee" />
          </svg>
          <div className="mt-[5px] h-[4px] w-[8px] rounded-full bg-[#7d8586]" />
        </Slot>
      </div>
      <div className="flex grow items-center justify-end pr-[27px]">
        <svg className="h-[8px] w-[14px]" viewBox="0 0 14 8" fill="none" stroke="#111" strokeWidth="1.600"><path d="M.8 7.200L7 1l6.200 6.200" /></svg>
        <svg className="ml-[23px] h-[20px] w-[21px]" viewBox="0 0 21 20">
          <path d="M5 15A4.500 4.500 0 0 1 4.500 6a6.500 6.500 0 0 1 12 0A4.500 4.500 0 0 1 17 15z" fill="#979797" stroke="#222" strokeWidth="1.300" />
          <path d="M2 12q4-6 9-3l2 6H5q-2 0-3-3z" fill="#e1e1e1" />
          <circle cx="15" cy="14" r="5.500" fill="#6d6d6d" /><path d="M13.700 11v6M16.500 11v6" stroke="#fff" strokeWidth="1.300" />
        </svg>
        <div className="ml-[22px] w-[32px] text-center leading-[20px] tracking-[0.1px]"><div>ENG</div><div>IN</div></div>
        <svg className="ml-[20px] h-[16px] w-[21px]" viewBox="0 0 21 16" fill="none" stroke="#151515" strokeWidth="1.400">
          <path d="M.8 6a13.800 13.800 0 0 1 19.400 0M3.700 9a9.700 9.700 0 0 1 13.600 0M6.500 11.700a5.700 5.700 0 0 1 8 0" /><circle cx="10.500" cy="13.700" r="2" fill="#151515" stroke="none" />
        </svg>
        <svg className="ml-[9px] h-[18px] w-[21px]" viewBox="0 0 21 18" fill="none" stroke="#151515" strokeWidth="1.300">
          <path d="M1 6.500h2.700L9 2v14l-5.300-4.500H1zM11.500 6a4.500 4.500 0 0 1 0 6M14 3.500a8 8 0 0 1 0 11M16.500 1.300a11.500 11.500 0 0 1 0 15.400" />
        </svg>
        <svg className="ml-[9px] h-[14px] w-[21px]" viewBox="0 0 21 14"><rect x=".8" y="1.300" width="16.500" height="11" rx="2.500" fill="none" stroke="#151515" strokeWidth="1.400" /><rect x="3" y="3.500" width="4" height="6.700" rx="1" fill="#151515" /><path d="M18.300 4.500q2 0 2 2.300t-2 2.300z" fill="#151515" /></svg>
        <div className="ml-[18px] w-[80px] pb-[2px] text-right leading-[20px] tracking-[0.300px] whitespace-nowrap"><div className="tracking-normal">16:56</div><div>22-03-2024</div></div>
        <svg className="ml-[11px] h-[20px] w-[16px]" viewBox="0 0 16 20" fill="#155063"><path d="M8 .5a6 6 0 0 1 6 6V12l2 3v1.200H0V15l2-3V6.500a6 6 0 0 1 6-6zM5.300 17.200h5.400a2.700 2.300 0 0 1-5.400 0z" /></svg>
      </div>
    </div>
  );
}

export default function App() {
  return (
    <div className="flex h-[1080px] w-[1920px] flex-col overflow-hidden bg-[#56575c] font-['Open_Sans','Noto_Sans',sans-serif]">
      <TabStrip />
      <Toolbar />
      <Favorites />
      <div className="flex h-[890px] shrink-0 pl-[5px]">
        <div className="flex h-[885px] w-[1860px] overflow-hidden rounded-[9px] bg-white">
          <div className="flex grow pb-px pl-[233px]">
            <Report />
          </div>
          <div className="flex w-[6px] shrink-0 flex-col bg-[#f0f1f1]">
            <div className="mt-[344px] grow bg-[#8a8a8a]" />
          </div>
        </div>
        <Sidebar />
      </div>
      <Taskbar />
    </div>
  );
}
